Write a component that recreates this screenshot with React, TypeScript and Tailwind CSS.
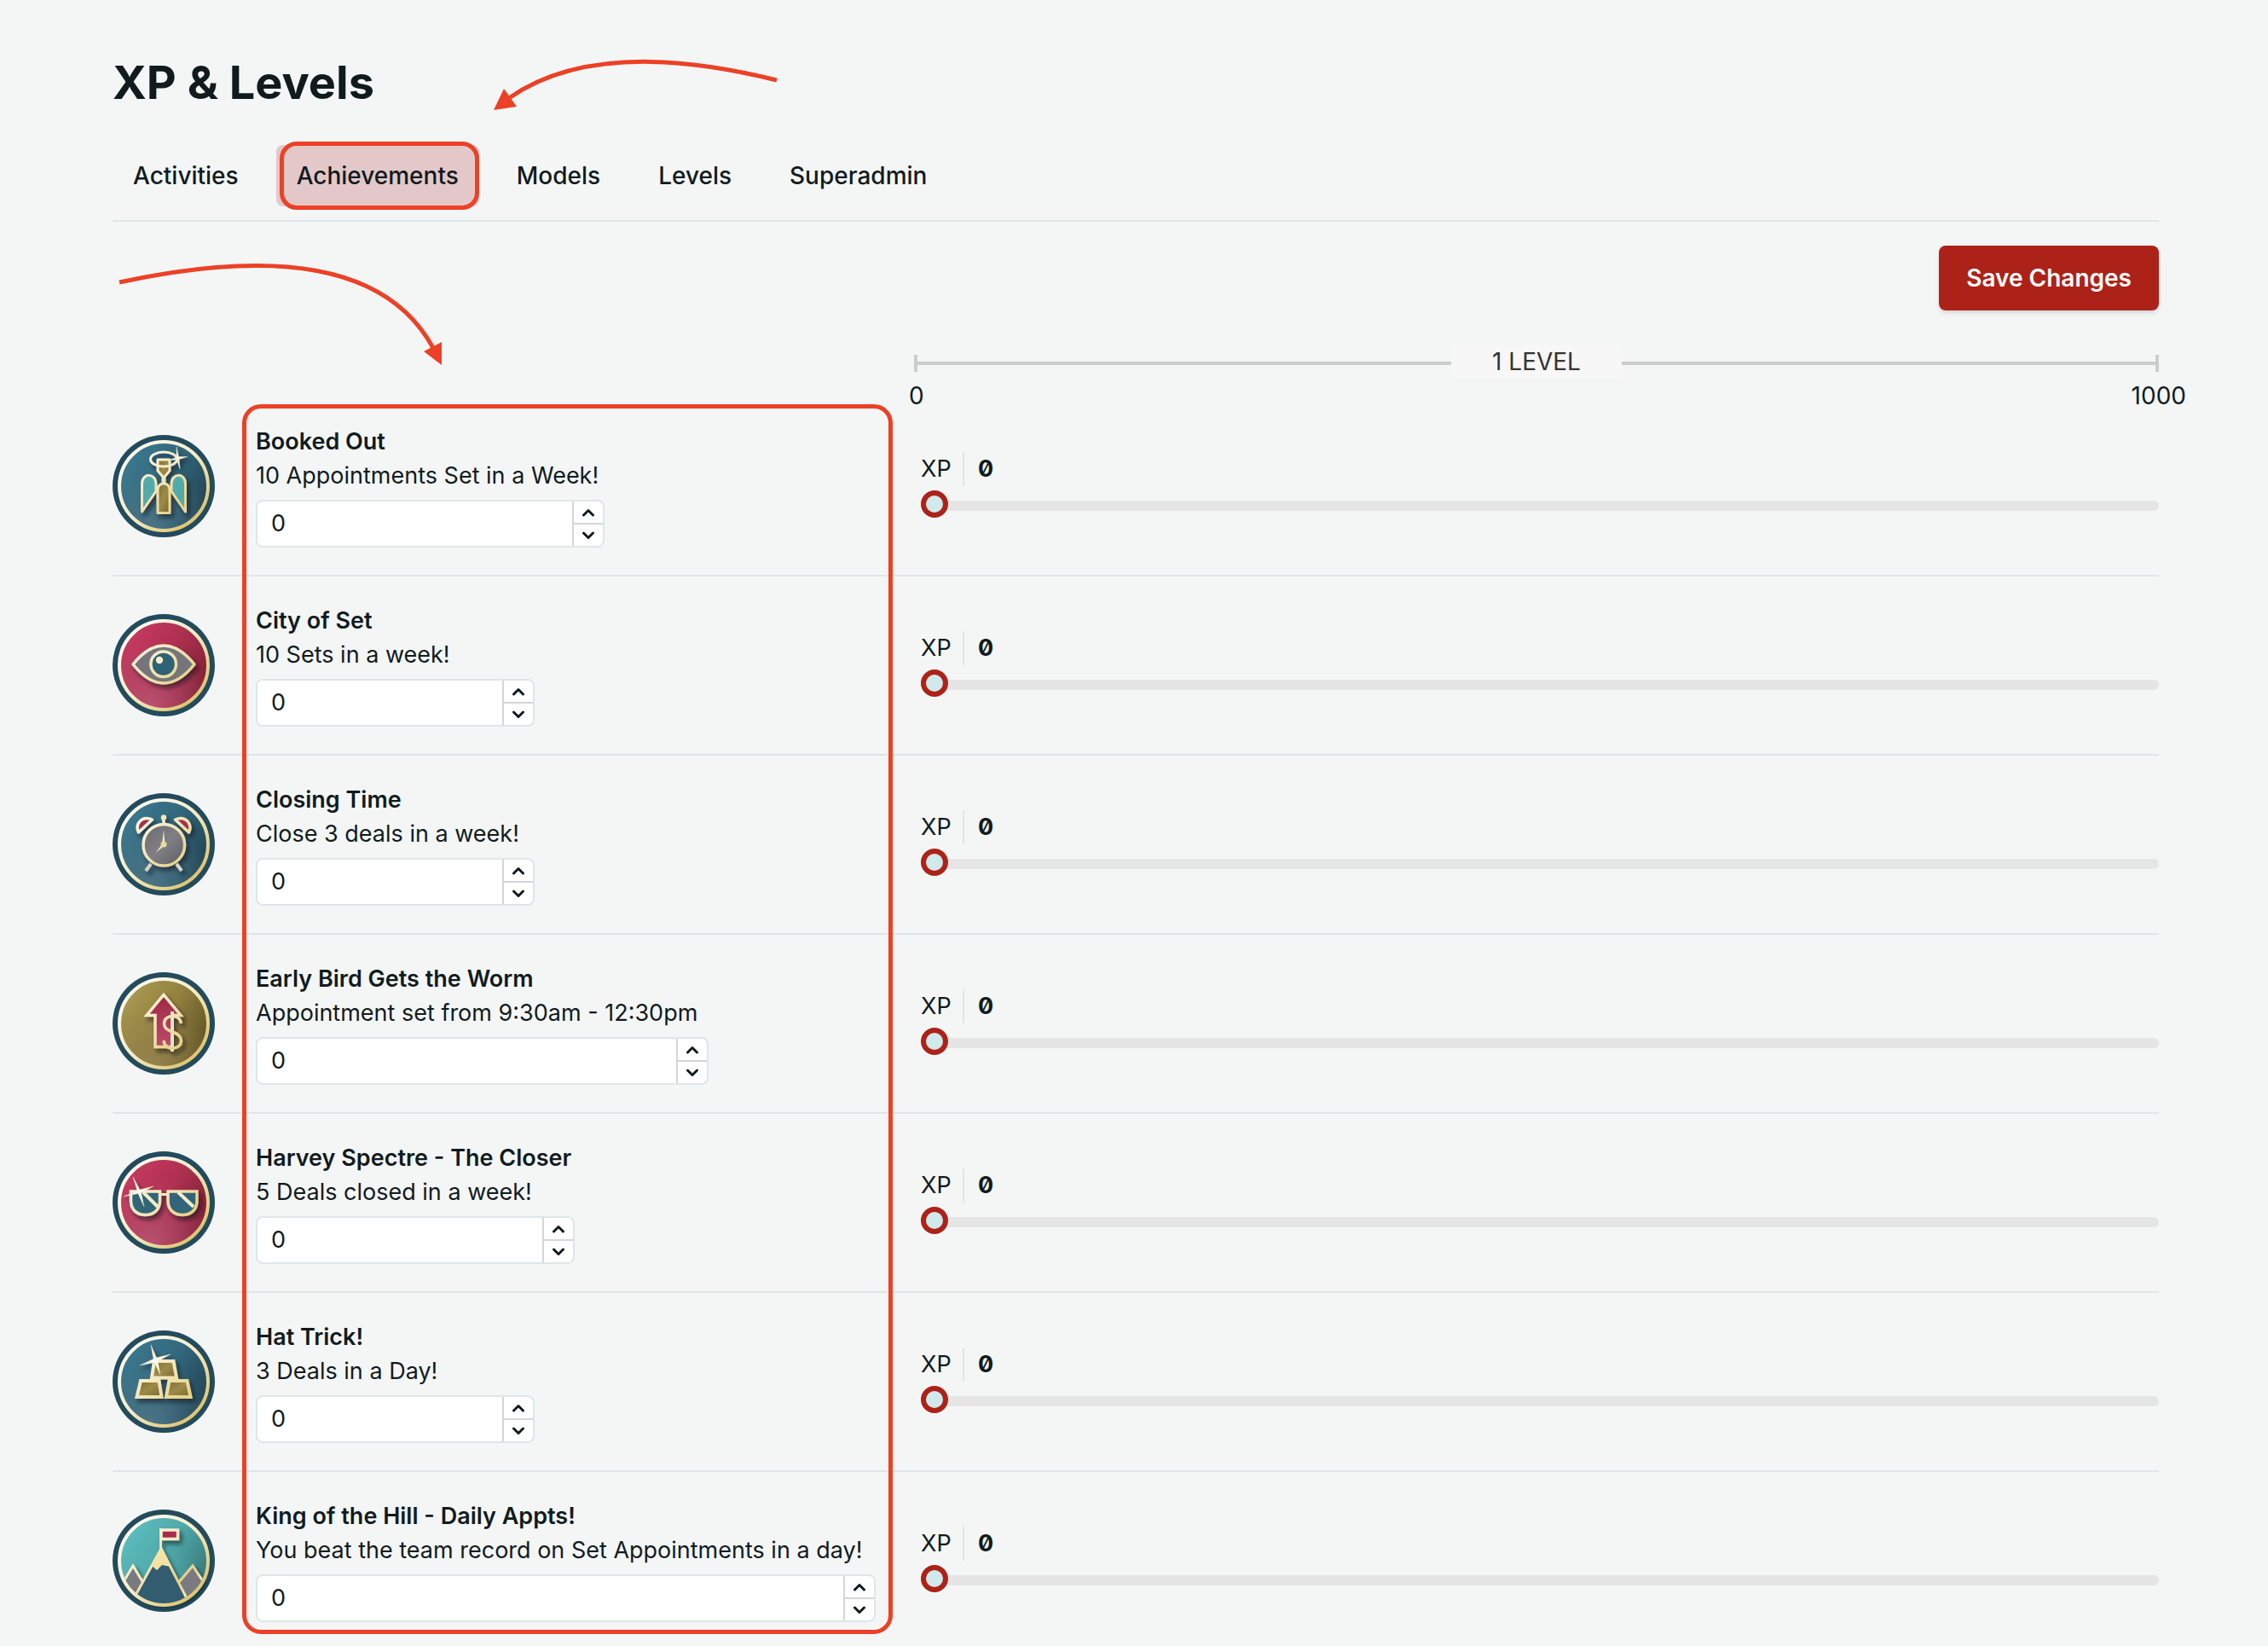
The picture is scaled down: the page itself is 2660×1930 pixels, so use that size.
import { useState, type ReactNode } from "react";
import clsx from "clsx";

type Metal = "teal" | "rose" | "gold" | "aqua";

type Achievement = {
    id: string;
    title: string;
    description: string;
    metal: Metal;
    art: ReactNode;
    width: string;
}

const tabs = ["Activities", "Achievements", "Models", "Levels", "Superadmin"];

const Sparkle = ({ d }: { d: string }) => (
    <path d={d} fill="#fffdf2" stroke="#e6d9a6" strokeWidth="0.5" />
)

const AngelArt = () => (
    <g stroke="url(#trim)" strokeWidth="3" strokeLinejoin="round">
        <path d="M34.5 90V57C34.5 44 51 44 51 58V66Z" fill="#52aaab" />
        <path d="M85.5 90V57C85.5 44 69 44 69 58V66Z" fill="#52aaab" />
        <path d="M53 91.5V64a7 7 0 0 1 14 0V91.5Z" fill="url(#bar)" />
        <path d="M53 29H67V42L61 49V55H59V49L53 42Z" fill="url(#bar)" />
        <ellipse cx="60" cy="28.5" rx="15.5" ry="8.5" fill="none" />
        <Sparkle d="M75 14L77.5 25.5L88 25.5L78 28.5L79 40L75.5 29L66 29.5L75 26.5Z" />
    </g>
)

const EyeArt = () => (
    <g stroke="url(#trim)" strokeWidth="3.5" strokeLinejoin="round">
        <path d="M24 59C36 44 48 37 60 37S84 44 96 59C84 74 72 81 60 81S36 74 24 59Z" fill="#74767b" />
        <circle cx="59.7" cy="58.7" r="14.8" fill="#2d6276" />
        <circle cx="55" cy="54" r="4.2" fill="#f7edc8" stroke="none" />
    </g>
)

const ClockArt = () => (
    <g stroke="url(#trim)" strokeWidth="3.5" strokeLinejoin="round">
        <path d="M45 83L39 91M75 83L81 91" stroke="#d8d6c4" strokeWidth="4" />
        <path d="M30.5 46C26 36 34 26 46.5 31Z" fill="#a52f4d" />
        <path d="M89.5 46C94 36 86 26 73.5 31Z" fill="#a52f4d" />
        <path d="M59.5 30L60.5 37" />
        <circle cx="60" cy="28.5" r="3.2" fill="#f4e7b4" stroke="none" />
        <circle cx="60.3" cy="60.7" r="24.3" fill="url(#stone)" />
        <path d="M60 43L61.5 61L51 69.5L58 60Z" fill="#f4ecd0" stroke="none" />
        <circle cx="60" cy="60" r="3.5" fill="#ecd998" stroke="none" />
    </g>
)

const ArrowArt = () => (
    <g stroke="url(#trim)" strokeWidth="3.5">
        <path d="M60 26.5L80 50.5H70V87.5H50V50.5H40Z" fill="url(#ruby)" />
        <path d="M70 46V93" stroke="#f2e8c4" strokeWidth="4" />
        <path d="M80.5 60C79.5 54 75 51.5 70.5 51.5C64.5 51.5 60.5 55 60.5 60C60.5 66 65 68 70.5 70C77 72.5 80.5 75 80.5 80C80.5 86 76 89 70.5 89C64.5 89 60.5 86 60 80" fill="none" />
    </g>
)

const GlassesArt = () => (
    <g stroke="url(#trim)" strokeWidth="3.5">
        <path d="M57 50.5H64" stroke="#f5eccb" strokeWidth="3" />
        <path d="M21.5 47H55.5V58C55.5 69 48 74.5 38.5 74.5S21.5 69 21.5 58Z" fill="#336578" />
        <path d="M65 47H99V58C99 69 91.5 74.5 82 74.5S65 69 65 58Z" fill="#336578" />
        <path d="M36 48L53 65M77 48L95 65" stroke="#f5eccb" strokeWidth="4" />
        <Sparkle d="M24 30L32 45L48 41L33.5 48.5L37 65L30 49.5L13 53L29 46.5Z" />
    </g>
)

const BarsArt = () => (
    <g stroke="url(#trim)" strokeWidth="4" fill="url(#bar)">
        <path d="M49 36H71.5L75 55.5H46Z" />
        <path d="M33 59H54.5L57.5 78H28.5Z" />
        <path d="M66.5 59H87.5L91.5 78H63Z" />
        <Sparkle d="M45 17L51.5 32L68 28L53 36L56 52L49 37.5L32 41L48 33.5Z" />
    </g>
)

const MountainArt = () => (
    <g clipPath="url(#face)" stroke="url(#trim)" strokeWidth="3">
        <path d="M8 93L24 66L42 96L30 112H8Z" fill="#7a7a80" />
        <path d="M112 93L94 66L72 92L90 112H112Z" fill="#7a7a80" />
        <path d="M25 104L57 46L89 108L60 116Z" fill="#315d70" />
        <path d="M57 45L46 66L52 71L58 65L68 67Z" fill="#f4e2a3" stroke="none" />
        <path d="M56.5 22V48" stroke="#f3e7bd" />
        <path d="M57 24H76.5V34.5H57Z" fill="#a92c4c" strokeWidth="3.5" />
    </g>
)

const achievements: Achievement[] = [
    { id: "booked-out", title: "Booked Out", description: "10 Appointments Set in a Week!", metal: "teal", art: <AngelArt />, width: "w-[409px]" },
    { id: "city-of-set", title: "City of Set", description: "10 Sets in a week!", metal: "rose", art: <EyeArt />, width: "w-[327px]" },
    { id: "closing-time", title: "Closing Time", description: "Close 3 deals in a week!", metal: "teal", art: <ClockArt />, width: "w-[327px]" },
    { id: "early-bird", title: "Early Bird Gets the Worm", description: "Appointment set from 9:30am - 12:30pm", metal: "gold", art: <ArrowArt />, width: "w-[531px]" },
    { id: "the-closer", title: "Harvey Spectre - The Closer", description: "5 Deals closed in a week!", metal: "rose", art: <GlassesArt />, width: "w-[374px]" },
    { id: "hat-trick", title: "Hat Trick!", description: "3 Deals in a Day!", metal: "teal", art: <BarsArt />, width: "w-[327px]" },
    { id: "king-of-the-hill", title: "King of the Hill - Daily Appts!", description: "You beat the team record on Set Appointments in a day!", metal: "aqua", art: <MountainArt />, width: "w-[727px]" },
];

const metals: Record<Metal, string[]> = {
    teal: ["#3b788e", "#32687d", "#25495a", "#4a7485"],
    rose: ["#c43a60", "#b03152", "#86233a", "#b8506f"],
    gold: ["#a99850", "#93823f", "#6a5a2a", "#94834c"],
    aqua: ["#5cbcbd", "#50a9aa", "#3a7f80", "#56b0b1"],
};

// Gradients shared by every badge on the page
const BadgeDefs = () => (
    <svg className="absolute size-0" aria-hidden="true">
        <defs>
            <linearGradient id="trim" gradientUnits="userSpaceOnUse" x1="20" y1="20" x2="95" y2="100">
                <stop offset="0" stopColor="#fffdf3" />
                <stop offset="0.45" stopColor="#f3e7bd" />
                <stop offset="0.8" stopColor="#e6d188" />
                <stop offset="1" stopColor="#f8f0d2" />
            </linearGradient>
            <linearGradient id="rim" x1="0" y1="0" x2="1" y2="1">
                <stop offset="0" stopColor="#ffffff" />
                <stop offset="0.5" stopColor="#f6ecc6" />
                <stop offset="0.85" stopColor="#dfc673" />
                <stop offset="1" stopColor="#f3e6b6" />
            </linearGradient>
            <linearGradient id="bar" x1="0" y1="0" x2="1" y2="1">
                <stop offset="0" stopColor="#7d6d30" />
                <stop offset="0.5" stopColor="#9d8b48" />
                <stop offset="1" stopColor="#76662e" />
            </linearGradient>
            <linearGradient id="stone" x1="0" y1="0" x2="1" y2="1">
                <stop offset="0" stopColor="#6a6a6f" />
                <stop offset="0.5" stopColor="#7f7f84" />
                <stop offset="1" stopColor="#5c5c62" />
            </linearGradient>
            <linearGradient id="ruby" x1="0" y1="0" x2="0" y2="1">
                <stop offset="0" stopColor="#a02847" />
                <stop offset="1" stopColor="#bd4a6a" />
            </linearGradient>
            <clipPath id="face">
                <circle cx="60" cy="60" r="50" />
            </clipPath>
            <filter id="lift" x="-20%" y="-20%" width="150%" height="150%">
                <feDropShadow dx="3" dy="4" stdDeviation="2.5" floodColor="#08161c" floodOpacity="0.6" />
            </filter>
        </defs>
    </svg>
)

const Badge = ({ item }: { item: Achievement }) => {
    const [light, mid, dark, low] = metals[item.metal];
    return (
        <svg className="size-[120px] shrink-0" viewBox="0 0 120 120" role="img" aria-label={item.title}>
            <linearGradient id={item.id + "-metal"} x1="0.15" y1="0.1" x2="0.95" y2="0.6">
                <stop offset="0" stopColor={light} />
                <stop offset="0.5" stopColor={mid} />
                <stop offset="1" stopColor={dark} />
            </linearGradient>
            <radialGradient id={item.id + "-glow"} cx="0.35" cy="0.95" r="0.7">
                <stop offset="0" stopColor={low} />
                <stop offset="1" stopColor={low} stopOpacity="0" />
            </radialGradient>
            <circle cx="60" cy="60" r="60" fill="#234b5c" />
            <circle cx="60" cy="60" r="52" fill={`url(#${item.id}-metal)`} />
            <circle cx="60" cy="60" r="52" fill={`url(#${item.id}-glow)`} />
            <g filter="url(#lift)">{item.art}</g>
            <circle cx="60" cy="60" r="52" fill="none" stroke="url(#rim)" strokeWidth="4" />
        </svg>
    )
}

const Chevron = ({ down }: { down?: boolean }) => (
    <svg className={clsx("w-4 h-2.5", down && "rotate-180")} viewBox="0 0 16 10" fill="none" stroke="#111b1e" strokeWidth="3" strokeLinecap="round" strokeLinejoin="round">
        <path d="M2.5 8L8 2.5L13.5 8" />
    </svg>
)

const NumberField = ({ item }: { item: Achievement }) => {
    const [value, setValue] = useState(0);
    return (
        <div className={clsx("mt-2 flex h-14 overflow-hidden rounded-lg border-2 border-[#dfe6e9] bg-white", item.width)}>
            <input
                type="number"
                aria-label={item.title + " count"}
                value={value}
                onChange={e => setValue(Number(e.target.value))}
                className="min-w-0 flex-1 bg-transparent px-4 outline-none [appearance:textfield] [&::-webkit-inner-spin-button]:appearance-none"
            />
            <div className="flex w-9 flex-col border-l-2 border-[#d5d5da]">
                <button aria-label="Increase" onClick={() => setValue(value + 1)} className="flex flex-1 items-center justify-center border-b-2 border-[#d5d5da]">
                    <Chevron />
                </button>
                <button aria-label="Decrease" onClick={() => setValue(value - 1)} className="flex flex-1 items-center justify-center">
                    <Chevron down />
                </button>
            </div>
        </div>
    )
}

const XpSlider = ({ item }: { item: Achievement }) => {
    const [xp, setXp] = useState(0);
    return (
        <div className="flex flex-1 flex-col pl-2">
            <label htmlFor={item.id} className="flex h-10 items-center">
                <span className="w-[51px] border-r-2 border-[#dfe6e9] leading-10">XP</span>
                <span className="pl-4 font-bold slashed-zero">{xp}</span>
            </label>
            <input
                id={item.id}
                type="range"
                min={0}
                max={1000}
                value={xp}
                onChange={e => setXp(Number(e.target.value))}
                className="h-10 w-full appearance-none bg-transparent pt-1.5 [&::-webkit-slider-runnable-track]:h-3 [&::-webkit-slider-runnable-track]:rounded-full [&::-webkit-slider-runnable-track]:bg-[#e5e5e5] [&::-webkit-slider-thumb]:-mt-3 [&::-webkit-slider-thumb]:size-8 [&::-webkit-slider-thumb]:appearance-none [&::-webkit-slider-thumb]:rounded-full [&::-webkit-slider-thumb]:border-[6px] [&::-webkit-slider-thumb]:border-[#ad2218] [&::-webkit-slider-thumb]:bg-[#d0e9ea]"
            />
        </div>
    )
}

const AchievementRow = ({ item }: { item: Achievement }) => (
    <li className="flex items-center gap-12 border-b-2 border-[#dfe6e9] py-8 first:pt-3.5 last:border-b-0 last:pb-0">
        <Badge item={item} />
        <div className="w-[724px] shrink-0 whitespace-nowrap">
            <h2 className="font-semibold leading-10">{item.title}</h2>
            <p className="leading-10">{item.description}</p>
            <NumberField item={item} />
        </div>
        <XpSlider item={item} />
    </li>
)

const LevelScale = () => (
    <div className="ml-[940px] mt-10 text-[28px]">
        <div className="flex h-10 items-center">
            <div className="mt-1 h-5 w-1 bg-[#cccccc]"></div>
            <div className="mt-1 h-1 flex-1 bg-[#cccccc]"></div>
            <p className="w-[200px] bg-[#f7f7f8] text-center leading-10 text-[#333333]">1 LEVEL</p>
            <div className="mt-1 h-1 flex-1 bg-[#cccccc]"></div>
            <div className="mt-1 h-5 w-1 bg-[#cccccc]"></div>
        </div>
        <div className="-ml-1.5 -mr-8 flex justify-between leading-10">
            <span>0</span>
            <span>1000</span>
        </div>
    </div>
)

export default function App() {
    const [active, setActive] = useState("Achievements");

    return (
        <main className="relative min-h-screen bg-[#f4f6f6] pl-33 pr-32 pt-16 font-['Inter',sans-serif] text-[27px] text-[#111b1e]">
            <BadgeDefs />
            <h1 className="text-[54px] font-bold leading-[66px]">XP &amp; Levels</h1>

            <nav className="mt-10 flex gap-5 border-b-2 border-[#dfe6e9] pb-4">
                {tabs.map(tab => (
                    <button
                        key={tab}
                        onClick={() => setActive(tab)}
                        className={clsx("relative h-[72px] rounded-lg px-6 text-[28px] font-medium", tab === active && "bg-[#e4c8c9]")}
                    >
                        {tab}
                        {tab === "Achievements" && (
                            <span className="absolute -inset-y-1 left-1 right-0 rounded-[20px] border-5 border-[#ec4126]"></span>
                        )}
                    </button>
                ))}
            </nav>

            <div className="mt-7 flex justify-end">
                <button className="h-19 rounded-lg bg-[#ad2218] px-8 text-[28px] font-semibold text-white shadow-md">Save Changes</button>
            </div>

            <LevelScale />

            <div className="relative">
                <ul>
                    {achievements.map(item => <AchievementRow key={item.id} item={item} />)}
                </ul>
                <div className="pointer-events-none absolute -bottom-3.5 -top-2.5 left-38 w-[763px] rounded-[22px] border-5 border-[#ec4126]"></div>
            </div>

            {/* hand drawn pointers to the tab and the list */}
            <svg className="pointer-events-none absolute left-0 top-0 h-[440px] w-[920px]" viewBox="0 0 920 440" fill="none" stroke="#ec4126" strokeWidth="5" aria-hidden="true">
                <path d="M911 94Q702 42 597 115" />
                <path d="M579 129L591 104L606 125Z" fill="#ec4126" stroke="none" />
                <path d="M140 331Q432 268 508 408" />
                <path d="M518 428L518 401L497 412Z" fill="#ec4126" stroke="none" />
            </svg>
        </main>
    )
}
